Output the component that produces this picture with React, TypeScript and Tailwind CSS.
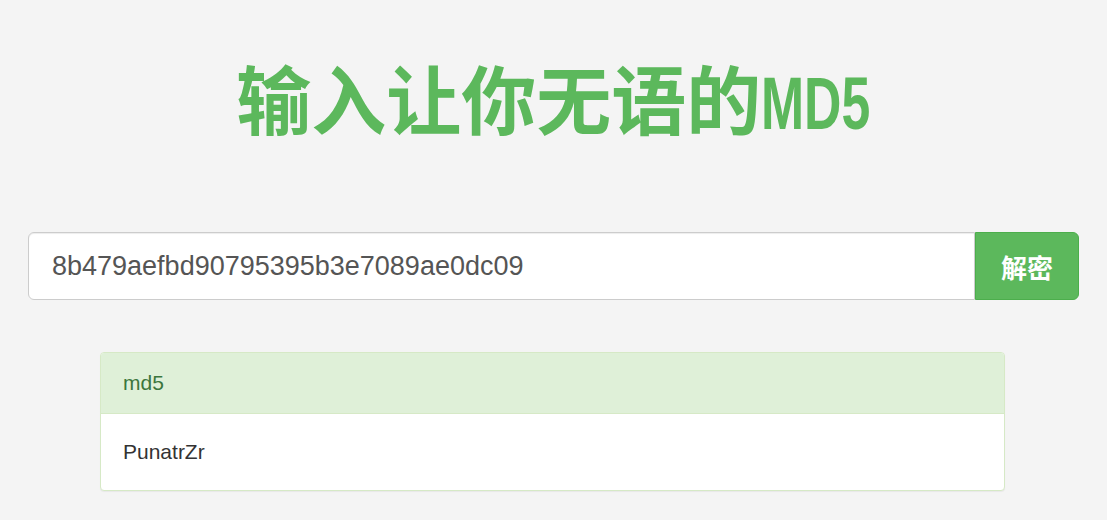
import React, { useState } from "react";

// md5 lookup result shown under the search box
const results = [{ id: "r1", type: "md5", value: "PunatrZr" }];

export default function App() {
  const [hash, setHash] = useState("8b479aefbd90795395b3e7089ae0dc09");

  return (
    <div className="min-h-[520px] bg-[#f4f4f4] font-['Liberation_Sans','Noto_Sans_CJK_SC',sans-serif] text-[#333]">
      <div className="px-[28px] pt-[56px]">
        {/* Title */}
        <h1 className="text-center text-[75px] leading-[82px] font-bold text-[#5cb85c] font-['Noto_Sans_CJK_SC','Liberation_Sans',sans-serif]">
          输入让你无语的
          <span className="inline-block origin-left scale-x-[0.69] -mr-[49px] font-['Liberation_Sans',sans-serif]">MD5</span>
        </h1>

        {/* Search box */}
        <div className="mt-[88px] flex">
          <input
            value={hash}
            onChange={(e) => setHash(e.target.value)}
            className="h-[68px] flex-1 rounded-l-[6px] border border-[#ccc] bg-white px-[23px] text-[27px] text-[#555] shadow-[inset_0_1px_1px_rgba(0,0,0,0.075)] outline-none"
          />
          <button className="h-[68px] w-[104px] rounded-r-[6px] border border-[#4cae4c] bg-[#5cb85c] text-[26px] font-bold text-white font-['Noto_Sans_CJK_SC',sans-serif]">
            解密
          </button>
        </div>

        {/* Result panel */}
        <div className="ml-[72px] mr-[74px] mt-[52px]">
          {results.map((r) => (
            <div key={r.id} className="rounded-[4px] border border-[#d6e9c6] bg-white shadow-[0_1px_1px_rgba(0,0,0,0.05)]">
              <div className="h-[61px] flex items-center rounded-t-[3px] border-b border-[#d6e9c6] bg-[#dff0d8] px-[22px] text-[21px] text-[#3c763d]">
                {r.type}
              </div>
              <div className="h-[76px] flex items-center px-[22px] text-[21px] text-[#333]">{r.value}</div>
            </div>
          ))}
        </div>
      </div>
    </div>
  );
}
